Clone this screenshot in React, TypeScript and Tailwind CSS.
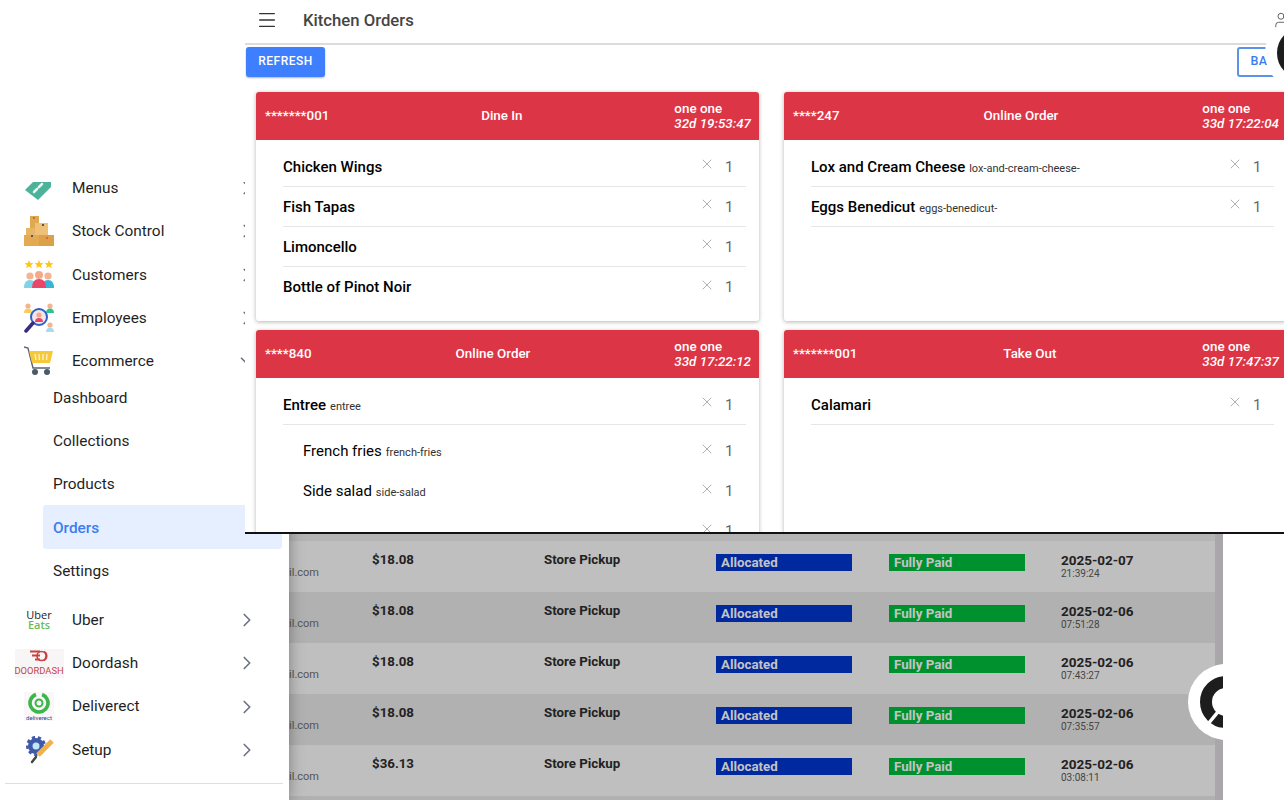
import { ChevronDown, ChevronRight, Menu, User, X } from "lucide-react"
import type { ReactNode } from "react"

type OrderLine = { name: string; slug?: string; indent?: boolean; first?: boolean; last?: boolean }

const orders: { id: string; type: string; time: string; lines: OrderLine[] }[] = [
  {
    id: "*******001",
    type: "Dine In",
    time: "32d 19:53:47",
    lines: [{ name: "Chicken Wings" }, { name: "Fish Tapas" }, { name: "Limoncello" }, { name: "Bottle of Pinot Noir", last: true }],
  },
  {
    id: "****247",
    type: "Online Order",
    time: "33d 17:22:04",
    lines: [
      { name: "Lox and Cream Cheese", slug: "lox-and-cream-cheese-" },
      { name: "Eggs Benedicut", slug: "eggs-benedicut-" },
    ],
  },
  {
    id: "****840",
    type: "Online Order",
    time: "33d 17:22:12",
    lines: [
      { name: "Entree", slug: "entree" },
      { name: "French fries", slug: "french-fries", indent: true, first: true },
      { name: "Side salad", slug: "side-salad", indent: true },
      { name: "", indent: true },
    ],
  },
  {
    id: "*******001",
    type: "Take Out",
    time: "33d 17:47:37",
    lines: [{ name: "Calamari" }],
  },
]

const tableRows = [
  { total: "$18.08", date: "2025-02-07", time: "21:39:24" },
  { total: "$18.08", date: "2025-02-06", time: "07:51:28" },
  { total: "$18.08", date: "2025-02-06", time: "07:43:27" },
  { total: "$18.08", date: "2025-02-06", time: "07:35:57" },
  { total: "$36.13", date: "2025-02-06", time: "03:08:11" },
]

function TagIcon() {
  return (
    <svg width="30" height="30" viewBox="0 0 30 30" className="block">
      <path d="M1 17 L14 4 L27 4 L27 14 L14 27 Z" fill="#4cb39a" />
      <path d="M10 19 L13 16 M15 14 L18 11" stroke="#e8f5f1" strokeWidth="2.5" strokeLinecap="round" />
      <path d="M12 17 L16 13" stroke="#e8f5f1" strokeWidth="1.2" />
    </svg>
  )
}

function BoxesIcon() {
  return (
    <svg width="30" height="30" viewBox="0 0 30 30" className="block">
      <rect x="6" y="0" width="9" height="12" fill="#e0a84f" />
      <rect x="11" y="7" width="13" height="13" fill="#eec078" />
      <rect x="0" y="19" width="15" height="11" fill="#e3aa54" />
      <rect x="15" y="19" width="15" height="11" fill="#dca04a" />
      <rect x="2" y="12" width="9" height="7" fill="#e8b566" />
      <rect x="9" y="1" width="2" height="2" fill="#c9703c" />
      <rect x="18" y="8" width="2" height="2" fill="#555" />
      <rect x="7" y="19" width="2" height="2" fill="#555" />
      <rect x="22" y="21" width="2" height="2" fill="#c9703c" />
    </svg>
  )
}

function CustomersIcon() {
  return (
    <svg width="30" height="30" viewBox="0 0 30 30" className="block">
      <path d="M5 0 L6.2 3 L9.4 3.2 L7 5.2 L7.8 8.2 L5 6.5 L2.2 8.2 L3 5.2 L.6 3.2 L3.8 3 Z" fill="#fdc718" />
      <path d="M15 0 L16.2 3 L19.4 3.2 L17 5.2 L17.8 8.2 L15 6.5 L12.2 8.2 L13 5.2 L10.6 3.2 L13.8 3 Z" fill="#fdc718" />
      <path d="M25 0 L26.2 3 L29.4 3.2 L27 5.2 L27.8 8.2 L25 6.5 L22.2 8.2 L23 5.2 L20.6 3.2 L23.8 3 Z" fill="#fdc718" />
      <circle cx="6" cy="16" r="3.6" fill="#f5b48f" />
      <circle cx="24" cy="16" r="3.6" fill="#f5b48f" />
      <path d="M0 28 Q0 20 6 20 Q12 20 12 28 Z" fill="#7fd4e8" />
      <path d="M18 28 Q18 20 24 20 Q30 20 30 28 Z" fill="#39b3d8" />
      <circle cx="15" cy="15" r="4" fill="#f5a98a" />
      <path d="M8 28 Q8 19 15 19 Q22 19 22 28 Z" fill="#e8476a" />
    </svg>
  )
}

function EmployeesIcon() {
  return (
    <svg width="30" height="30" viewBox="0 0 30 30" className="block">
      <circle cx="4" cy="3" r="2.6" fill="#f5b48f" />
      <path d="M0 10 Q0 5.5 4 5.5 Q8 5.5 8 10 Z" fill="#f5cf5a" />
      <circle cx="26" cy="3" r="2.6" fill="#f5b48f" />
      <path d="M22 10 Q22 5.5 26 5.5 Q30 5.5 30 10 Z" fill="#2fc48d" />
      <circle cx="26" cy="22" r="2.6" fill="#f5b48f" />
      <path d="M22 29 Q22 24.5 26 24.5 Q30 24.5 30 29 Z" fill="#a8dcec" />
      <circle cx="15" cy="14" r="8" fill="#f3e6ea" stroke="#2f5fc4" strokeWidth="2" />
      <circle cx="15" cy="12" r="2.6" fill="#f5a98a" />
      <path d="M11 19 Q11 15 15 15 Q19 15 19 19 Z" fill="#e8476a" />
      <path d="M9 20 L2 28" stroke="#3a2a80" strokeWidth="3.5" strokeLinecap="round" />
    </svg>
  )
}

function CartIcon() {
  return (
    <svg width="30" height="30" viewBox="0 0 30 30" className="block">
      <path d="M0 1 L4 2 L9 22 L26 22" fill="none" stroke="#5a6570" strokeWidth="1.4" />
      <path d="M5 5 L29 5 L26 17 L8 17 Z" fill="#f6c83a" />
      <path d="M11 8 L12 14 M15 8 L15.5 14 M19 8 L19 14 M23 8 L22.5 14" stroke="#fff2c2" strokeWidth="1.4" />
      <circle cx="11" cy="26" r="3" fill="#4a5a66" />
      <circle cx="23" cy="26" r="3" fill="#4a5a66" />
    </svg>
  )
}

function UberLogo() {
  return (
    <div className="flex flex-col items-center w-[30px] text-[11px] leading-[9.5px] font-['Open_Sans',sans-serif]">
      <span className="text-[#222]">Uber</span>
      <span className="font-semibold text-[#6dbb57]">Eats</span>
    </div>
  )
}

function DoordashLogo() {
  return (
    <div className="flex flex-col items-center justify-center w-[49px] h-[29px] shrink-0 bg-[#f7f5f6] font-['Roboto',sans-serif]">
      <svg width="18" height="13" viewBox="0 0 18 13" className="block">
        <path d="M0 1.5 H10 M2 5.5 H10 M5 9.5 H10" stroke="#c8433f" strokeWidth="1.8" />
        <circle cx="11.5" cy="6" r="4.5" fill="none" stroke="#c8433f" strokeWidth="1.6" />
        <path d="M14 1.5 A5 5 0 0 1 14 10.5" fill="none" stroke="#c8433f" strokeWidth="1.4" />
      </svg>
      <span className="text-[9.4px] leading-[11px] text-[#c8433f] mt-[2px]">DOORDASH</span>
    </div>
  )
}

function DeliverectLogo() {
  return (
    <div className="flex flex-col items-center w-[30px] h-[29px] bg-[#f8f8f8]">
      <svg width="22" height="22" viewBox="0 0 22 22" className="block">
        <circle cx="11" cy="11" r="9" fill="none" stroke="#3cb54a" strokeWidth="3.6" strokeDasharray="50 7" transform="rotate(-70 11 11)" />
        <circle cx="11" cy="11" r="3.5" fill="none" stroke="#3cb54a" strokeWidth="2" />
      </svg>
      <span className="text-[6px] leading-[7px] text-[#2f3f8f] font-['Roboto',sans-serif]">deliverect</span>
    </div>
  )
}

function SetupIcon() {
  return (
    <svg width="30" height="30" viewBox="0 0 30 30" className="block">
      <circle cx="12" cy="11" r="8" fill="#3f5aa8" stroke="#3f5aa8" strokeWidth="4" strokeDasharray="3 2.6" />
      <circle cx="12" cy="11" r="6.5" fill="#3f5aa8" />
      <circle cx="12" cy="11" r="3.5" fill="#bfe9f5" />
      <path d="M14 20 L28 6" stroke="#f2b248" strokeWidth="5" />
      <path d="M12 22 L8 27" stroke="#444" strokeWidth="2.5" strokeLinecap="round" />
    </svg>
  )
}

function NavRow({ icon, label, open }: { icon: ReactNode; label: string; open?: boolean }) {
  return (
    <div className="flex items-center h-[43.33px] pl-[24px] pr-[31.5px] shrink-0">
      <div className="w-[30px] h-[30px] flex items-center justify-center shrink-0">{icon}</div>
      <span className="ml-[18px] pt-[1px] flex-1 text-[15.4px] text-[#1f1f1f]">{label}</span>
      {open ? (
        <ChevronDown size={22} strokeWidth={1.8} className="text-[#6b7280]" />
      ) : (
        <ChevronRight size={22} strokeWidth={1.8} className="text-[#6b7280]" />
      )}
    </div>
  )
}

function SubRow({ label, active }: { label: string; active?: boolean }) {
  return (
    <div
      className={
        active
          ? "flex items-center h-[43.33px] ml-[43px] mr-[7px] pl-[10px] pt-[2.5px] bg-[#e6efff] rounded-[3px] text-[15.4px] font-medium text-[#3b7df0]"
          : "flex items-center h-[43.33px] ml-[43px] mr-[7px] pl-[10px] pt-[2.5px] text-[15.4px] text-[#1f1f1f]"
      }
    >
      {label}
    </div>
  )
}

function Sidebar() {
  return (
    <aside className="relative z-10 w-[289px] shrink-0 bg-white flex flex-col shadow-[0_0_14px_rgba(0,0,0,0.35)]">
      <div className="h-[182px] shrink-0" />
      <div className="h-[27.67px] overflow-hidden shrink-0">
        <div className="-mt-[15.67px]">
          <NavRow icon={<TagIcon />} label="Menus" />
        </div>
      </div>
      <NavRow icon={<BoxesIcon />} label="Stock Control" />
      <NavRow icon={<CustomersIcon />} label="Customers" />
      <NavRow icon={<EmployeesIcon />} label="Employees" />
      <NavRow icon={<CartIcon />} label="Ecommerce" open />
      <div className="-mt-[7.5px] mb-[6.1px] flex flex-col">
        <SubRow label="Dashboard" />
        <SubRow label="Collections" />
        <SubRow label="Products" />
        <SubRow label="Orders" active />
        <SubRow label="Settings" />
      </div>
      <NavRow icon={<UberLogo />} label="Uber" />
      <NavRow icon={<DoordashLogo />} label="Doordash" />
      <NavRow icon={<DeliverectLogo />} label="Deliverect" />
      <NavRow icon={<SetupIcon />} label="Setup" />
      <div className="mt-[11px] ml-[5px] mr-[6px] border-t border-[#dedede]" />
    </aside>
  )
}

function ChatBubble({ className }: { className: string }) {
  return (
    <div className={className}>
      <svg width="76" height="76" viewBox="0 0 76 76" className="block">
        <circle cx="38" cy="38" r="20" fill="none" stroke="#1d1d1d" strokeWidth="12" />
        <path d="M38 38 L20 60" stroke="#fff" strokeWidth="3.5" />
      </svg>
    </div>
  )
}

function OrdersTable() {
  return (
    <div className="relative w-[934px] shrink-0 overflow-hidden pt-[534px] flex font-['Roboto',sans-serif]">
      <div className="flex-1 pt-[7px] bg-[#b4b4b4]">
        {tableRows.map((row, i) => (
          <div
            key={i}
            className={
              i % 2 === 0
                ? "grid grid-cols-[83px_172px_172px_173px_172px_1fr] h-[51px] bg-[#bfbfbf] text-[#222]"
                : "grid grid-cols-[83px_172px_172px_173px_172px_1fr] h-[51px] bg-[#b1b1b1] text-[#222]"
            }
          >
            <div className="flex justify-end overflow-hidden pt-[25px] pr-[53px] text-[11px] leading-[13px] text-[#555]">
              <span className="whitespace-nowrap">mail.com</span>
            </div>
            <div className="pt-[10px] text-[13.3px] leading-[18px] font-bold">{row.total}</div>
            <div className="pt-[10px] text-[13.3px] leading-[18px] font-bold">Store Pickup</div>
            <div className="pt-[13px]">
              <div className="w-[136px] h-[17px] pl-[5px] bg-[#00299f] text-[13.3px] leading-[17px] font-bold text-[#c4c4c4]">Allocated</div>
            </div>
            <div className="pt-[13px]">
              <div className="w-[136px] h-[17px] pl-[5px] bg-[#00912f] text-[13.3px] leading-[17px] font-bold text-[#c4c4c4]">Fully Paid</div>
            </div>
            <div className="pt-[10px]">
              <div className="text-[13.5px] leading-[18px] font-bold">{row.date}</div>
              <div className="text-[10px] leading-[9px] text-[#444]">{row.time}</div>
            </div>
          </div>
        ))}
        <div className="h-[10px] bg-[#b1b1b1]" />
      </div>
      <div className="w-[8px] bg-[#a9a7a9]" />
      <ChatBubble className="absolute left-[899px] top-[664px] w-[76px] h-[76px] rounded-full bg-white" />
    </div>
  )
}

function OrderCard({ id, type, time, lines }: { id: string; type: string; time: string; lines: OrderLine[] }) {
  return (
    <div className="h-[229px] rounded-[3px] bg-white shadow-[0_1px_4px_rgba(0,0,0,0.3)] overflow-hidden flex flex-col">
      <div className="flex items-center justify-between h-[48px] pl-[9px] pr-[8px] bg-[#dc3545] text-white text-[13.4px] font-medium shrink-0">
        <span>{id}</span>
        <span>{type}</span>
        <div className="flex flex-col leading-[15px]">
          <span>one one</span>
          <span className="italic">{time}</span>
        </div>
      </div>
      <div className="flex flex-col pt-[7px] pl-[27px] pr-[13px]">
        {lines.map((line, i) => (
          <div
            key={i}
            className={
              line.indent
                ? line.first
                  ? "flex items-center h-[40px] mt-[6px] pl-[20px] pr-[13px] shrink-0"
                  : "flex items-center h-[40px] pl-[20px] pr-[13px] shrink-0"
                : line.last
                  ? "flex items-center h-[40px] pr-[13px] shrink-0"
                  : "flex items-center h-[40px] pr-[13px] shrink-0 border-b border-[#e6e6e6]"
            }
          >
            <span
              className={
                line.indent
                  ? "flex-1 pt-[1px] text-black text-[15px] font-normal"
                  : "flex-1 pt-[1px] text-black text-[15px] font-medium"
              }
            >
              {line.name}
              {line.slug && <span className="ml-[4px] text-[11px] font-normal text-[#333]">{line.slug}</span>}
            </span>
            <X size={16} strokeWidth={1} className="mx-[1px] text-[#888] -mt-[5px]" />
            <span className="ml-[9.5px] w-[8px] pt-[1px] text-[15px] text-[#666]">1</span>
          </div>
        ))}
      </div>
    </div>
  )
}

function KitchenPanel() {
  return (
    <div className="absolute z-20 left-[245px] top-0 w-[1039px] h-[534px] overflow-hidden bg-white border-b-2 border-[#111] font-['Roboto',sans-serif]">
      <header className="flex items-center h-[45px] pl-[11px] border-b-2 border-[#dddbdd]">
        <Menu size={22} strokeWidth={1.5} className="-mt-[4px] text-[#333]" />
        <h1 className="ml-[25px] pb-[2px] text-[16.7px] font-medium text-[#454545]">Kitchen Orders</h1>
        <User size={18} strokeWidth={1.1} className="relative z-10 ml-auto -mr-[6px] -mt-[4px] text-[#444]" />
      </header>
      <div className="flex items-center justify-between h-[30px] mt-[2px] pl-[1px] pr-[3px]">
        <button className="h-[30px] w-[79px] pb-[2px] rounded-[3px] bg-[#3d7fff] text-white text-[12px] font-medium tracking-[0.5px] shadow-[0_1px_2px_rgba(0,0,0,0.3)]">REFRESH</button>
        <button className="h-[30px] w-[44px] pb-[2px] rounded-[3px] border-2 border-[#5b93e6] text-[#3b7df0] text-[12.5px] font-medium tracking-[0.5px]">BA</button>
      </div>
      <div className="grid grid-cols-[503px_503px] gap-x-[25px] gap-y-[9px] pl-[11px] pt-[15px]">
        {orders.map((order, i) => (
          <OrderCard key={i} {...order} />
        ))}
      </div>
      <ChatBubble className="absolute left-[1020px] top-[15px] w-[76px] h-[76px] rounded-full bg-white" />
    </div>
  )
}

export default function App() {
  return (
    <div className="relative flex w-[1284px] h-[800px] overflow-hidden bg-white font-['Roboto',sans-serif]">
      <Sidebar />
      <OrdersTable />
      <KitchenPanel />
    </div>
  )
}
